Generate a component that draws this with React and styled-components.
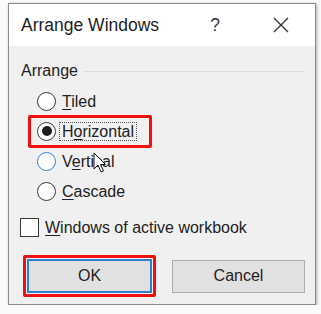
import styled, { createGlobalStyle } from 'styled-components'

const GlobalStyle = createGlobalStyle`
	body {
		margin: 0;
		background: #fafafa;
		font-family: "Liberation Sans", Arial, sans-serif;
		color: #222;
	}
`

const Page = styled.div`
	padding: 3px 0 0 8px;
`

const Dialog = styled.div`
	width: 308px;
	height: 302px;
	box-sizing: border-box;
	border: 1px solid #8a8a8a;
	box-shadow: 1px 1px 3px rgba(0, 0, 0, 0.3);
	background: #f0f0f0;
	display: flex;
	flex-direction: column;
`

const TitleBar = styled.div`
	height: 42px;
	background: #fff;
	display: flex;
	align-items: center;
	padding-left: 12px;
`

const Title = styled.div`
	flex: 1;
	font-size: 17.5px;
	color: #1e1e1e;
`

const TitleButton = styled.div`
	width: 46px;
	height: 42px;
	display: flex;
	align-items: center;
	justify-content: center;
	font-size: 17.5px;
	color: #333;
	margin-right: ${(p) => p.$gap}px;
`

const Body = styled.div`
	flex: 1;
	display: flex;
	flex-direction: column;
	padding: 13px 10px 0 12px;
	font-size: 16px;
`

const GroupHeader = styled.div`
	height: 24px;
	display: flex;
	align-items: center;
	gap: 5px;

	&::after {
		content: '';
		flex: 1;
		height: 1px;
		background: #dcdcdc;
	}
`

const RadioList = styled.div`
	display: flex;
	flex-direction: column;
	margin-top: 3px;
	padding-left: 7px;
`

const RadioRow = styled.div`
	height: 30px;
	display: flex;
	align-items: center;
`

const Highlight = styled.div`
	display: inline-flex;
	align-items: center;
	border: 3px solid ${(p) => (p.$on ? '#f01010' : 'transparent')};
	border-radius: 2px;
	padding: ${(p) => p.$pad};
`

const RadioItem = styled(Highlight)`
	height: 33px;
	box-sizing: border-box;
	gap: 3px;
	flex-shrink: 0;
`

const Circle = styled.span`
	width: 19px;
	height: 19px;
	box-sizing: border-box;
	border-radius: 50%;
	border: 1.5px solid ${(p) => (p.$hover ? '#2b86d8' : '#3a3a3a')};
	background: #fff;
	display: flex;
	align-items: center;
	justify-content: center;

	&::after {
		content: '';
		width: 10px;
		height: 10px;
		border-radius: 50%;
		background: ${(p) => (p.$checked ? '#1f1f1f' : 'transparent')};
	}
`

const Label = styled.span`
	padding: 0 2px;
	line-height: 17px;
	border: 1px dotted ${(p) => (p.$focus ? '#555' : 'transparent')};
	white-space: nowrap;
`

const Key = styled.span`
	text-decoration: underline;
	text-underline-offset: 2px;
`

const CheckRow = styled.div`
	display: flex;
	align-items: center;
	gap: 6px;
	margin-top: 12px;
	margin-left: -1px;
`

const CheckBox = styled.span`
	width: 19px;
	height: 19px;
	box-sizing: border-box;
	border: 1.5px solid #3a3a3a;
	background: #fff;
`

const ButtonRow = styled.div`
	display: flex;
	align-items: center;
	margin-top: 18px;
	margin-left: 2px;
	gap: 16px;
`

const Button = styled.div`
	width: ${(p) => p.$w}px;
	height: ${(p) => p.$h}px;
	box-sizing: border-box;
	background: #e1e1e1;
	border: ${(p) => (p.$default ? '2px solid #2f7fd0' : '1px solid #adadad')};
	display: flex;
	align-items: center;
	justify-content: center;
	font-size: 16px;
	color: #222;
`

const Cursor = styled.svg`
	position: absolute;
	left: 93px;
	top: 152px;
`

const radios = [
	{ key: 'T', rest: 'iled' },
	{ pre: 'H', key: 'o', rest: 'rizontal', checked: true },
	{ pre: 'V', key: 'e', rest: 'rtical', hover: true },
	{ key: 'C', rest: 'ascade' },
]

const App = () => {
	return (
		<Page>
			<GlobalStyle />
			<Dialog>
				<TitleBar>
					<Title>Arrange Windows</Title>
					<TitleButton $gap={20}>?</TitleButton>
					<TitleButton $gap={11}>
						<svg width="16" height="16" viewBox="0 0 16 16">
							<path d="M1 1 L15 15 M15 1 L1 15" stroke="#333" strokeWidth="1.3" />
						</svg>
					</TitleButton>
				</TitleBar>
				<Body>
					<GroupHeader>Arrange</GroupHeader>
					<RadioList>
						{radios.map((r) => (
							<RadioRow key={r.rest}>
								<RadioItem $on={r.checked} $pad="0 12px 0 6px">
									<Circle $checked={r.checked} $hover={r.hover} />
									<Label $focus={r.checked}>
										{r.pre}
										<Key>{r.key}</Key>
										{r.rest}
									</Label>
								</RadioItem>
							</RadioRow>
						))}
					</RadioList>
					<CheckRow>
						<CheckBox />
						<span>
							<Key>W</Key>indows of active workbook
						</span>
					</CheckRow>
					<ButtonRow>
						<Highlight $on $pad="1px">
							<Button $default $w={125} $h={34}>OK</Button>
						</Highlight>
						<Button $w={133} $h={33}>Cancel</Button>
					</ButtonRow>
				</Body>
			</Dialog>
			<Cursor width="14" height="22" viewBox="0 0 14 22">
				<path
					d="M1 1 L1 17 L5 13 L8 20 L10.5 19 L7.5 12.5 L12.5 12.5 Z"
					fill="#fff"
					stroke="#111"
					strokeWidth="1"
					strokeLinejoin="round"
				/>
			</Cursor>
		</Page>
	)
}

export default App
